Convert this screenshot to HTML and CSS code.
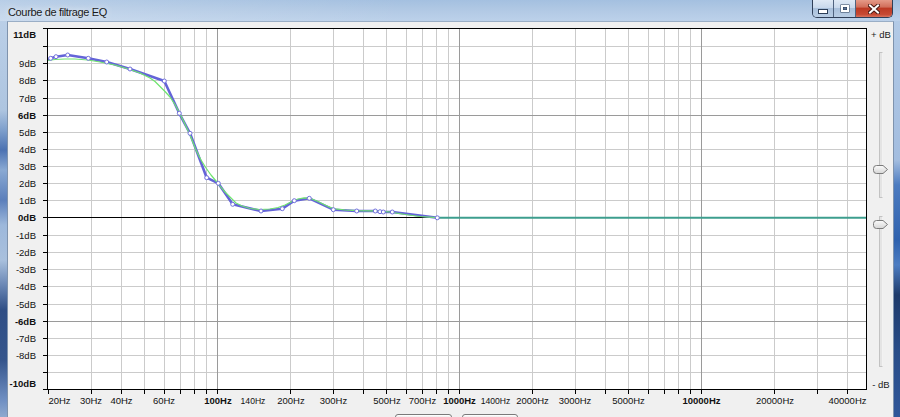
FILE: index.html
```html
<!DOCTYPE html>
<html lang="fr">
<head>
<meta charset="utf-8">
<title>Courbe de filtrage EQ</title>
<link rel="stylesheet" href="styles.css">
</head>
<body>
<div class="window">
  <header class="titlebar">
    <span class="title">Courbe de filtrage EQ</span>
    <div class="caption-buttons">
      <div class="cap cap-min" role="button" aria-label="Réduire">
        <svg class="glyph-min" width="10" height="5" viewBox="0 0 10 5"><rect x="0.5" y="0.5" width="9" height="4" fill="#fff" stroke="#2c3e57"/></svg>
      </div>
      <div class="cap cap-max" role="button" aria-label="Agrandir">
        <svg width="10" height="9" viewBox="0 0 10 9"><rect x="0.5" y="0.5" width="9" height="8" fill="#2c3e57"/><rect x="2" y="2" width="6" height="5" fill="none" stroke="#fff" stroke-width="2"/><rect x="3.5" y="3.5" width="3" height="2" fill="#5d7495"/></svg>
      </div>
      <div class="cap cap-close" role="button" aria-label="Fermer">
        <svg width="12" height="10" viewBox="0 0 12 10"><path d="M2 1.5L10 8.5M10 1.5L2 8.5" stroke="#4a1a14" stroke-width="4" stroke-linecap="square"/><path d="M2 1.5L10 8.5M10 1.5L2 8.5" stroke="#fff" stroke-width="2" stroke-linecap="square"/></svg>
      </div>
    </div>
  </header>

  <main class="client">
    <div class="graph-row">
      <svg class="graph" width="860" height="388" viewBox="8 22 860 388">
        <defs>
          <clipPath id="plotclip"><rect x="47" y="28" width="820" height="362"/></clipPath>
        </defs>
        <rect class="plot-bg" x="47" y="28" width="820" height="362"/>

        <path class="grid-minor" d="M91.5 29V389M121.5 29V389M144.5 29V389M164.5 29V389M180.5 29V389M194.5 29V389M206.5 29V389M290.5 29V389M333.5 29V389M363.5 29V389M386.5 29V389M406.5 29V389M422.5 29V389M436.5 29V389M448.5 29V389M532.5 29V389M575.5 29V389M605.5 29V389M628.5 29V389M648.5 29V389M664.5 29V389M678.5 29V389M690.5 29V389M774.5 29V389M817.5 29V389M847.5 29V389"/>
        <path class="grid-minor" d="M48 46.5H866M48 63.5H866M48 80.5H866M48 98.5H866M48 132.5H866M48 149.5H866M48 166.5H866M48 183.5H866M48 200.5H866M48 235.5H866M48 252.5H866M48 269.5H866M48 286.5H866M48 304.5H866M48 338.5H866M48 355.5H866M48 372.5H866"/>
        <path class="grid-major" d="M217.5 29V389M459.5 29V389M701.5 29V389M48 115.5H866M48 321.5H866"/>
        <path class="grid-zero" d="M48 217.5H866"/>

        <g clip-path="url(#plotclip)">
          <polyline class="curve-blue" points="47,60 50.7,58.3 56,56.7 67.7,55 88.3,58.3 106.7,62 130,69 164.3,81 179.3,113.3 190,133.3 206.7,177.7 218.3,183.3 232.7,204.3 261,211 282.3,208.7 294.3,200.7 309.3,198.3 333.3,209.7 356.7,211 375.3,211 380,211.7 383.3,212 392.3,212 437.3,217.8"/>
          <polyline class="curve-green" points="47,60.5 55,59.5 65,59 75,59 88,60 100,62 115,65 130,69.5 140,73 150,78 155,81.5 160,86.5 165,91.5 170,97 175,104.5 179,112 184,122 190,135 196,150 201,160 206,168 211,175 216,181 220,186 225,192 230,197 236,203 242,206 250,208.5 260,209.5 270,209 278,207.5 285,205 292,201.5 298,199 304,197.8 310,198.3 318,201.5 326,205.5 333,208.6 345,210 357,210.6 370,210.8 380,211.2 390,212 405,214.5 420,216.5 437,217.6"/>
          <path class="curve-flat" d="M437 217.8H867"/>
          <g class="points">
            <circle cx="50.7" cy="58.3" r="2"/><circle cx="56" cy="56.7" r="2"/><circle cx="67.7" cy="55" r="2"/><circle cx="88.3" cy="58.3" r="2"/><circle cx="106.7" cy="62" r="2"/><circle cx="130" cy="69" r="2"/><circle cx="164.3" cy="81" r="2"/><circle cx="179.3" cy="113.3" r="2"/><circle cx="190" cy="133.3" r="2"/><circle cx="206.7" cy="177.7" r="2"/><circle cx="218.3" cy="183.3" r="2"/><circle cx="232.7" cy="204.3" r="2"/><circle cx="261" cy="211" r="2"/><circle cx="282.3" cy="208.7" r="2"/><circle cx="294.3" cy="200.7" r="2"/><circle cx="309.3" cy="198.3" r="2"/><circle cx="333.3" cy="209.7" r="2"/><circle cx="356.7" cy="211" r="2"/><circle cx="375.3" cy="211" r="2"/><circle cx="380" cy="211.7" r="2"/><circle cx="383.3" cy="212" r="2"/><circle cx="392.3" cy="212" r="2"/><circle cx="437.3" cy="217.8" r="2"/>
          </g>
        </g>

        <rect class="plot-border" x="47.5" y="28.5" width="819" height="361"/>
        <path class="ticks" d="M43 28.5H47M43 46.5H47M43 63.5H47M43 80.5H47M43 98.5H47M43 115.5H47M43 132.5H47M43 149.5H47M43 166.5H47M43 183.5H47M43 200.5H47M43 217.5H47M43 235.5H47M43 252.5H47M43 269.5H47M43 286.5H47M43 304.5H47M43 321.5H47M43 338.5H47M43 355.5H47M43 372.5H47M43 389.5H47"/>
        <path class="ticks" d="M48.5 390V394M91.5 390V394M121.5 390V394M144.5 390V394M164.5 390V394M180.5 390V394M194.5 390V394M206.5 390V394M217.5 390V394M290.5 390V394M333.5 390V394M363.5 390V394M386.5 390V394M406.5 390V394M422.5 390V394M436.5 390V394M448.5 390V394M459.5 390V394M532.5 390V394M575.5 390V394M605.5 390V394M628.5 390V394M648.5 390V394M664.5 390V394M678.5 390V394M690.5 390V394M701.5 390V394M774.5 390V394M817.5 390V394M847.5 390V394"/>

        <g class="ylabels">
          <text class="b" x="36" y="38.4">11dB</text>
          <text x="36" y="66.6">9dB</text>
          <text x="36" y="83.8">8dB</text>
          <text x="36" y="101.6">7dB</text>
          <text class="b" x="36" y="118.6">6dB</text>
          <text x="36" y="135.6">5dB</text>
          <text x="36" y="152.6">4dB</text>
          <text x="36" y="169.6">3dB</text>
          <text x="36" y="186.6">2dB</text>
          <text x="36" y="203.6">1dB</text>
          <text class="b" x="36" y="221">0dB</text>
          <text x="36" y="238.6">-1dB</text>
          <text x="36" y="255.6">-2dB</text>
          <text x="36" y="272.6">-3dB</text>
          <text x="36" y="289.6">-4dB</text>
          <text x="36" y="307.6">-5dB</text>
          <text class="b" x="36" y="324.6">-6dB</text>
          <text x="36" y="341.6">-7dB</text>
          <text x="36" y="358.6">-8dB</text>
          <text class="b" x="36" y="387.4">-10dB</text>
        </g>
        <g class="xlabels">
          <text x="59.5" y="403.7">20Hz</text>
          <text x="91" y="403.7">30Hz</text>
          <text x="121.5" y="403.7">40Hz</text>
          <text x="164" y="403.7">60Hz</text>
          <text class="b" x="218" y="403.7">100Hz</text>
          <text class="s" x="253" y="403.5">140Hz</text>
          <text x="291" y="403.7">200Hz</text>
          <text x="333.5" y="403.7">300Hz</text>
          <text x="387" y="403.7">500Hz</text>
          <text x="422.5" y="403.7">700Hz</text>
          <text class="b" x="459.5" y="403.7">1000Hz</text>
          <text class="s" x="495.5" y="403.5">1400Hz</text>
          <text x="532.5" y="403.7">2000Hz</text>
          <text x="575" y="403.7">3000Hz</text>
          <text x="628.5" y="403.7">5000Hz</text>
          <text class="b" x="701.5" y="403.7">10000Hz</text>
          <text x="775" y="403.7">20000Hz</text>
          <text x="847.5" y="403.7">40000Hz</text>
        </g>
      </svg>

      <aside class="db-sliders">
        <span class="db-label">+ dB</span>
        <div class="vslider vslider-max">
          <div class="track"></div>
          <svg class="thumb thumb-max" width="15" height="9" viewBox="0 0 15 9"><defs><linearGradient id="tg1" x1="0" y1="0" x2="0" y2="1"><stop offset="0" stop-color="#fbfbfb"/><stop offset="1" stop-color="#d6d6d6"/></linearGradient></defs><path d="M3.5 0.5H10L14.5 4.5L10 8.5H3.5Q0.5 8.5 0.5 5.5V3.5Q0.5 0.5 3.5 0.5Z" fill="url(#tg1)" stroke="#7b7b7b"/></svg>
        </div>
        <div class="vslider vslider-min">
          <div class="track"></div>
          <svg class="thumb thumb-min" width="15" height="9" viewBox="0 0 15 9"><defs><linearGradient id="tg2" x1="0" y1="0" x2="0" y2="1"><stop offset="0" stop-color="#fbfbfb"/><stop offset="1" stop-color="#d6d6d6"/></linearGradient></defs><path d="M3.5 0.5H10L14.5 4.5L10 8.5H3.5Q0.5 8.5 0.5 5.5V3.5Q0.5 0.5 3.5 0.5Z" fill="url(#tg2)" stroke="#7b7b7b"/></svg>
        </div>
        <span class="db-label db-label-min">- dB</span>
      </aside>
    </div>

    <div class="button-row">
      <div class="btn btn-a" role="button" aria-label="Enregistrer"></div>
      <div class="btn btn-b" role="button" aria-label="Annuler"></div>
    </div>
  </main>
</div>
</body>
</html>
```

FILE: styles.css
```css
* { box-sizing: border-box; }

html, body {
  margin: 0;
  padding: 0;
}

body {
  width: 900px;
  height: 417px;
  overflow: hidden;
  font-family: "Liberation Sans", Arial, sans-serif;
  background: #8fa9cf;
}

.window {
  width: 900px;
  height: 417px;
  display: flex;
  flex-direction: column;
  overflow: hidden;
  background:
    linear-gradient(to bottom, #bdd1e9 0px, #aec5e0 110px, #7e9fcc 130px, #4c72b2 150px, #89a9d3 170px, #5b7fbb 200px, #9db8db 225px, #a9c0dd 260px, #6a87b5 285px, #2f4e85 310px, #35558c 360px, #6f8fc2 400px, #8fa9cf 417px) left top / 8px 100% no-repeat,
    linear-gradient(to bottom, #b5cce7 0px, #a3bddf 160px, #4c7bc0 185px, #2f62ae 240px, #4d7dc2 265px, #1f3b6b 295px, #294d88 350px, #30579a 417px) right top / 7px 100% no-repeat,
    #a9c2df;
}

/* ---------- title bar ---------- */
.titlebar {
  height: 21px;
  flex: none;
  display: flex;
  align-items: flex-start;
  padding-left: 8px;
  background:
    linear-gradient(to right, rgba(255,255,255,0.22), rgba(255,255,255,0) 45%),
    linear-gradient(to bottom, #a4c0e0 0%, #b3cae5 55%, #bcd1ea 100%);
}

.title {
  padding-top: 5px;
  font-size: 11px;
  line-height: 14px;
  letter-spacing: -0.35px;
  color: #1b1b1b;
  text-shadow: 0 0 6px rgba(255,255,255,0.9);
  white-space: nowrap;
}

.caption-buttons {
  margin-left: auto;
  margin-right: 7px;
  height: 18px;
  display: flex;
  flex: none;
  border: 1px solid #2f3f58;
  border-top: none;
  border-radius: 0 0 5px 5px;
  overflow: hidden;
}

.cap {
  flex: none;
  height: 17px;
  display: flex;
  align-items: center;
  justify-content: center;
}

.cap svg { display: block; }

.cap-min,
.cap-max {
  background: linear-gradient(to bottom, #dfe9f5 0%, #c9d9ec 45%, #a9c0db 50%, #b9cde4 100%);
  border-right: 1px solid #50637f;
}

.cap-min { width: 21px; }
.cap-min .glyph-min { margin-top: 6px; }
.cap-max { width: 22px; }

.cap-close {
  width: 36px;
  background: linear-gradient(to bottom, #e59a88 0%, #d2705c 40%, #bd3a24 50%, #c64a34 85%, #d9735e 100%);
}

/* ---------- client area ---------- */
.client {
  flex: 1;
  min-height: 0;
  margin: 0 6px 0 7px;
  border-left: 1px solid #7f93ad;
  border-right: 1px solid #7f93ad;
  border-top: 1px solid #9aaec6;
  background: #f0f0f0;
  display: flex;
  flex-direction: column;
  overflow: hidden;
}

.graph-row {
  flex: none;
  height: 388px;
  display: flex;
}

.graph {
  display: block;
  flex: none;
}

.plot-bg { fill: #ffffff; }
.grid-minor { stroke: #cbcbcb; stroke-width: 1; fill: none; }
.grid-major { stroke: #9a9a9a; stroke-width: 1; fill: none; }
.grid-zero { stroke: #000; stroke-width: 1; fill: none; }
.plot-border { fill: none; stroke: #000; stroke-width: 1; }
.ticks { stroke: #000; stroke-width: 1; fill: none; }

.curve-blue {
  fill: none;
  stroke: #6464d8;
  stroke-width: 2.6;
  stroke-linejoin: round;
}

.curve-green {
  fill: none;
  stroke: #6fe46f;
  stroke-width: 1.2;
  stroke-linejoin: round;
}

.curve-flat {
  fill: none;
  stroke: #3d9e8e;
  stroke-width: 2;
}

.points circle {
  fill: #ffffff;
  stroke: #7070dc;
  stroke-width: 1;
}

.ylabels text,
.xlabels text {
  font-family: "Liberation Sans", Arial, sans-serif;
  font-size: 9.5px;
  fill: #111;
}

.ylabels text { text-anchor: end; }
.xlabels text { text-anchor: middle; }
.ylabels .b, .xlabels .b { font-weight: bold; }
.xlabels .s { font-size: 8.6px; }

/* ---------- dB sliders ---------- */
.db-sliders {
  width: 25px;
  flex: none;
  display: flex;
  flex-direction: column;
  align-items: center;
  padding-top: 6px;
}

.db-label {
  font-size: 9.5px;
  line-height: 13px;
  color: #1a1a1a;
  white-space: nowrap;
  padding-left: 1px;
}

.db-label-min { margin-top: 11px; }

.vslider {
  position: relative;
  width: 15px;
  display: flex;
  justify-content: center;
}

.vslider-max { margin-top: 11px; height: 146px; }
.vslider-min { margin-top: 18px; height: 151px; }

.track {
  width: 4px;
  height: 100%;
  border: 1px solid #c2c2c2;
  border-right-color: #f2f2f2;
  border-radius: 1px;
  background: #e4e4e4;
}

.thumb {
  position: absolute;
  left: 0;
  display: block;
}

.thumb-max { top: 113px; }
.thumb-min { top: 4px; }

/* ---------- bottom buttons ---------- */
.button-row {
  flex: none;
  display: flex;
  gap: 10px;
  padding: 4px 0 0 387px;
}

.btn {
  flex: none;
  height: 23px;
  border: 1px solid #7a7a7a;
  border-radius: 3px;
  background: linear-gradient(to bottom, #f4f4f4 0%, #ececec 45%, #dddddd 50%, #d0d0d0 100%);
  box-shadow: inset 0 0 0 1px #fcfcfc;
}

.btn-a { width: 57px; }
.btn-b { width: 56px; }
```
